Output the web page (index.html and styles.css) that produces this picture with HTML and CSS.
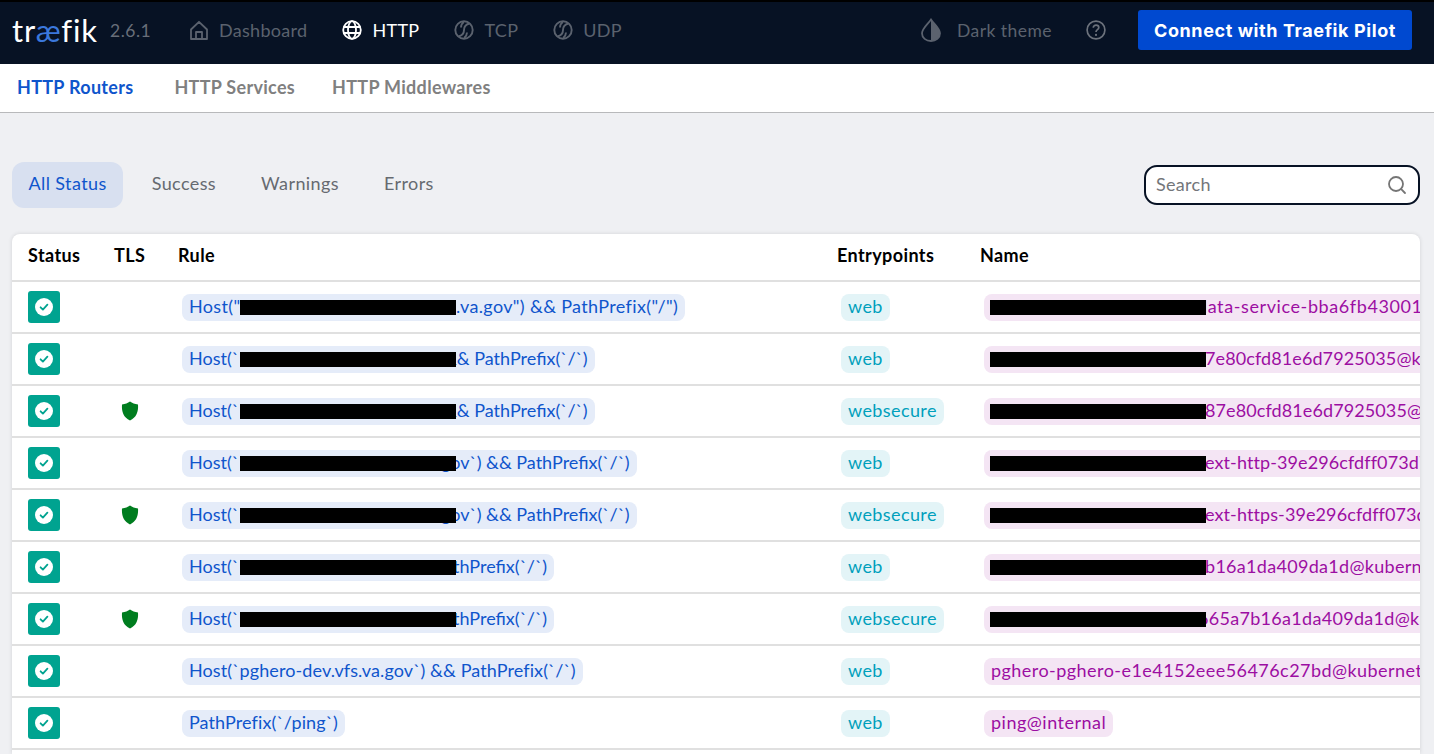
FILE: index.html
```html
<!DOCTYPE html>
<html lang="en">
<head>
<meta charset="utf-8">
<title>Traefik</title>
<link rel="stylesheet" href="styles.css">
</head>
<body>
<svg class="defs" width="0" height="0" aria-hidden="true">
  <symbol id="check" viewBox="0 0 18 18">
    <circle cx="9" cy="9" r="9" fill="#fff"/>
    <path d="M5.600 9.300l2.300 2.300 4.500-4.900" fill="none" stroke="#00a390" stroke-width="1.800" stroke-linecap="round" stroke-linejoin="round"/>
  </symbol>
  <symbol id="shield" viewBox="0 0 18 20">
    <path d="M9 .6c2.200 1.600 4.700 2.500 8 2.800.6 7.500-1.800 13.200-8 16-6.200-2.800-8.600-8.500-8-16 3.300-.3 5.800-1.200 8-2.800z" fill="#007d1f"/>
  </symbol>
  <symbol id="ball" viewBox="0 0 20 20">
    <circle cx="10" cy="10" r="8.700" fill="none" stroke="currentColor" stroke-width="1.900"/>
    <path d="M15.500 3.500c-4 1-5.500 3.500-5.500 6.500s-1.500 5.500-5.500 6.500M9.800 2c-2.500 1.800-2.800 3.500-2.800 5.500M13 12.500c0 2-.5 3.500-2.800 5.500" fill="none" stroke="currentColor" stroke-width="1.900"/>
  </symbol>
</svg>

<header class="topbar">
  <div class="brand">tr<span class="brand-ae">æ</span>fik</div>
  <span class="version">2.6.1</span>
  <nav class="mainnav">
    <a class="navitem">
      <svg class="navicon" viewBox="0 0 20 20"><path d="M2 9.500L10 1.800l8 7.700V19H2z M7 19v-7h6v7" fill="none" stroke="currentColor" stroke-width="1.800" stroke-linejoin="round"/></svg>
      Dashboard
    </a>
    <a class="navitem active">
      <svg class="navicon" viewBox="0 0 20 20"><g fill="none" stroke="currentColor" stroke-width="1.800"><circle cx="10" cy="10" r="8.800"/><ellipse cx="10" cy="10" rx="4" ry="8.800"/><path d="M1.500 7h17M1.500 13h17"/></g></svg>
      HTTP
    </a>
    <a class="navitem"><svg class="navicon"><use href="#ball"/></svg>TCP</a>
    <a class="navitem"><svg class="navicon"><use href="#ball"/></svg>UDP</a>
  </nav>
  <div class="topright">
    <a class="theme">
      <svg class="theme-icon" viewBox="0 0 20 24"><path d="M10 1.500C6.500 6.500 1 10.500 1 15.200 1 20 5 23 10 23s9-3 9-7.800C19 10.500 13.500 6.500 10 1.500z" fill="none" stroke="currentColor" stroke-width="1.800"/><path d="M10 1.500c3.500 5 9 9 9 13.700C19 20 15 23 10 23z" fill="currentColor"/></svg>
      Dark theme
    </a>
    <svg class="help" viewBox="0 0 20 20"><circle cx="10" cy="10" r="8.900" fill="none" stroke="currentColor" stroke-width="1.700"/><path d="M7.300 7.700c0-1.600 1.200-2.600 2.800-2.600s2.700 1 2.700 2.400c0 2.200-2.800 2.200-2.800 4.500" fill="none" stroke="currentColor" stroke-width="1.700"/><circle cx="10" cy="14.900" r="1.100" fill="currentColor"/></svg>
    <button class="pilot">Connect with Traefik Pilot</button>
  </div>
</header>

<nav class="subnav">
  <a class="subitem active">HTTP Routers</a>
  <a class="subitem">HTTP Services</a>
  <a class="subitem">HTTP Middlewares</a>
</nav>

<main class="content">
  <div class="toolbar">
    <div class="filters">
      <a class="filter active">All Status</a>
      <a class="filter">Success</a>
      <a class="filter">Warnings</a>
      <a class="filter">Errors</a>
    </div>
    <label class="search">
      <span class="search-text">Search</span>
      <svg class="search-icon" viewBox="0 0 20 20"><circle cx="9" cy="9" r="7" fill="none" stroke="currentColor" stroke-width="1.800"/><path d="M14.200 14.200L18 18" stroke="currentColor" stroke-width="1.800" stroke-linecap="round"/></svg>
    </label>
  </div>

  <section class="card">
    <div class="row head">
      <div>Status</div><div>TLS</div><div>Rule</div><div>Entrypoints</div><div>Name</div>
    </div>

    <div class="row">
      <div class="status"><svg class="check"><use href="#check"/></svg></div>
      <div></div>
      <div class="cell-chip"><span class="chip rule rule-wide"><span class="pre">Host("</span><i class="redact"></i><span>.va.gov") &amp;&amp; PathPrefix("/")</span></span></div>
      <div class="cell-chip"><span class="chip entry">web</span></div>
      <div class="cell-chip name-cell"><span class="chip name"><i class="redact"></i><span class="after a-data">data-service-bba6fb43001-kubernetes</span></span></div>
    </div>

    <div class="row">
      <div class="status"><svg class="check"><use href="#check"/></svg></div>
      <div></div>
      <div class="cell-chip"><span class="chip rule rule-tight"><span class="pre">Host(`</span><i class="redact"></i><span class="r-amp">&amp;&amp; PathPrefix(`/`)</span></span></div>
      <div class="cell-chip"><span class="chip entry">web</span></div>
      <div class="cell-chip name-cell"><span class="chip name hex"><i class="redact"></i><span class="after a-near">7e80cfd81e6d7925035@kubernetes</span></span></div>
    </div>

    <div class="row">
      <div class="status"><svg class="check"><use href="#check"/></svg></div>
      <div class="tls"><svg class="shield"><use href="#shield"/></svg></div>
      <div class="cell-chip"><span class="chip rule rule-tight"><span class="pre">Host(`</span><i class="redact"></i><span class="r-amp">&amp;&amp; PathPrefix(`/`)</span></span></div>
      <div class="cell-chip"><span class="chip entry">websecure</span></div>
      <div class="cell-chip name-cell"><span class="chip name hex"><i class="redact"></i><span class="after a-near">87e80cfd81e6d7925035@kubernetes</span></span></div>
    </div>

    <div class="row">
      <div class="status"><svg class="check"><use href="#check"/></svg></div>
      <div></div>
      <div class="cell-chip"><span class="chip rule rule-tight"><span class="pre">Host(`</span><i class="redact"></i><span class="r-gov">gov`) &amp;&amp; PathPrefix(`/`)</span></span></div>
      <div class="cell-chip"><span class="chip entry">web</span></div>
      <div class="cell-chip name-cell"><span class="chip name hex"><i class="redact"></i><span class="after a-near">ext-http-39e296cfdff073d7e@kubernetes</span></span></div>
    </div>

    <div class="row">
      <div class="status"><svg class="check"><use href="#check"/></svg></div>
      <div class="tls"><svg class="shield"><use href="#shield"/></svg></div>
      <div class="cell-chip"><span class="chip rule rule-tight"><span class="pre">Host(`</span><i class="redact"></i><span class="r-gov">gov`) &amp;&amp; PathPrefix(`/`)</span></span></div>
      <div class="cell-chip"><span class="chip entry">websecure</span></div>
      <div class="cell-chip name-cell"><span class="chip name hex"><i class="redact"></i><span class="after a-near">ext-https-39e296cfdff073d7e@kubernetes</span></span></div>
    </div>

    <div class="row">
      <div class="status"><svg class="check"><use href="#check"/></svg></div>
      <div></div>
      <div class="cell-chip"><span class="chip rule rule-tight"><span class="pre">Host(`</span><i class="redact"></i><span class="r-th">thPrefix(`/`)</span></span></div>
      <div class="cell-chip"><span class="chip entry">web</span></div>
      <div class="cell-chip name-cell"><span class="chip name hex-mid"><i class="redact"></i><span class="after a-near">b16a1da409da1d@kubernetes</span></span></div>
    </div>

    <div class="row">
      <div class="status"><svg class="check"><use href="#check"/></svg></div>
      <div class="tls"><svg class="shield"><use href="#shield"/></svg></div>
      <div class="cell-chip"><span class="chip rule rule-tight"><span class="pre">Host(`</span><i class="redact"></i><span class="r-th">thPrefix(`/`)</span></span></div>
      <div class="cell-chip"><span class="chip entry">websecure</span></div>
      <div class="cell-chip name-cell"><span class="chip name hex-mid"><i class="redact"></i><span class="after a-under">665a7b16a1da409da1d@kubernetes</span></span></div>
    </div>

    <div class="row">
      <div class="status"><svg class="check"><use href="#check"/></svg></div>
      <div></div>
      <div class="cell-chip"><span class="chip rule">Host(`pghero-dev.vfs.va.gov`) &amp;&amp; PathPrefix(`/`)</span></div>
      <div class="cell-chip"><span class="chip entry">web</span></div>
      <div class="cell-chip name-cell"><span class="chip name name-long">pghero-pghero-e1e4152eee56476c27bd@kubernetes</span></div>
    </div>

    <div class="row">
      <div class="status"><svg class="check"><use href="#check"/></svg></div>
      <div></div>
      <div class="cell-chip"><span class="chip rule">PathPrefix(`/ping`)</span></div>
      <div class="cell-chip"><span class="chip entry">web</span></div>
      <div class="cell-chip name-cell"><span class="chip name ping">ping@internal</span></div>
    </div>
  </section>
</main>
</body>
</html>
```
FILE: styles.css
```css
* { box-sizing: border-box; }
html, body { margin: 0; height: 754px; overflow: hidden; }
body {
  background: #eff0f3;
  font-family: "Lato", "Noto Sans", sans-serif;
  font-size: 18px;
  color: #000;
}
.defs { position: absolute; }
a { display: flex; align-items: center; }

.topbar {
  height: 64px;
  background: #071224;
  border-top: 2px solid #000;
  display: flex;
  align-items: center;
  padding: 0 22px 6px 12px;
}
.brand {
  font-size: 31px;
  font-weight: 400;
  color: #fff;
  width: 98px;
  letter-spacing: .8px;
}
.brand-ae { color: #3b78dc; }
.version { color: #686e79; font-size: 17.5px; width: 79px; letter-spacing: .5px; }
.mainnav { display: flex; gap: 35px; }
.navitem { color: #5b626e; font-size: 18px; gap: 10px; letter-spacing: .3px; }
.navitem.active { color: #fff; }
.navicon { width: 20px; height: 20px; color: inherit; }
.topright { margin-left: auto; display: flex; align-items: center; }
.theme { color: #5b626e; font-size: 17.5px; gap: 16px; letter-spacing: .45px; }
.theme-icon { width: 20px; height: 24px; }
.help { width: 20px; height: 20px; color: #6c727c; margin: 0 32px 0 34px; }
.pilot {
  width: 274px;
  height: 40px;
  background: #0049d0;
  color: #fff;
  border: 0;
  border-radius: 3px;
  font-family: "Inter", sans-serif;
  font-weight: 700;
  font-size: 18px;
  letter-spacing: .6px;
}

.subnav {
  height: 49px;
  background: #fff;
  border-bottom: 1px solid #b8b9bb;
  display: flex;
  align-items: center;
  padding: 0 0 2px 17px;
  gap: 37px;
}
.subitem { color: #808080; font-weight: 700; font-size: 18px; letter-spacing: .3px; }
.subitem.active { color: #0f55cc; margin-right: 4px; }

.content { padding: 49px 14px 0 12px; }
.toolbar { display: flex; align-items: center; justify-content: space-between; height: 46px; }
.filters { display: flex; gap: 12px; align-items: center; }
.filter { height: 46px; padding: 0 16.5px 4px; border-radius: 12px; color: #666a70; font-size: 18px; letter-spacing: .4px; }
.filter.active { background: #d8e0f0; color: #0f55cc; }
.search {
  width: 276px;
  height: 40px;
  background: #fff;
  border: 2px solid #071224;
  border-radius: 13px;
  display: flex;
  align-items: center;
  justify-content: space-between;
  padding: 0 11px 0 10px;
}
.search-text { color: #73767a; font-size: 18px; letter-spacing: .3px; padding-bottom: 2px; }
.search-icon { width: 20px; height: 20px; color: #757575; }

.card {
  margin-top: 26px;
  background: #fff;
  border-radius: 8px 8px 0 0;
  box-shadow: 0 0 4px rgba(0, 0, 0, .12);
  overflow: hidden;
  height: 520px;
}
.row {
  display: grid;
  grid-template-columns: 86px 64px 659px 143px 1fr;
  align-items: center;
  height: 52px;
  padding-left: 16px;
  border-bottom: 2px solid #e0e0e0;
  white-space: nowrap;
}
.row.head { height: 48px; font-weight: 700; font-size: 18px; letter-spacing: .4px; padding-bottom: 4px; }
.status {
  width: 32px;
  height: 32px;
  background: #00a390;
  border-radius: 3px;
  display: flex;
  align-items: center;
  justify-content: center;
}
.check { width: 18px; height: 18px; }
.tls { display: flex; padding-left: 7px; }
.shield { width: 18px; height: 20px; }
.cell-chip { padding-left: 4px; min-width: 0; }
.name-cell { overflow: hidden; }
.chip {
  display: inline-flex;
  align-items: center;
  height: 27px;
  padding: 0 7px 3px;
  border-radius: 8px;
  font-size: 18px;
  letter-spacing: .1px;
  white-space: pre;
}
.rule { background: #e5ecf9; color: #0f55cc; }
.rule-wide { letter-spacing: .35px; }
.rule-tight { letter-spacing: 0; }
.entry { background: #e3f4f7; color: #00a0bc; letter-spacing: .4px; }
.name { background: #f4e5f4; color: #9c0ea2; letter-spacing: .6px; }
.name.hex { letter-spacing: .1px; }
.name.hex-mid { letter-spacing: .3px; }
.name.name-long { letter-spacing: .45px; }
.name.ping { letter-spacing: .5px; }
.pre { display: inline-block; width: 51px; }
.redact { display: block; width: 216px; height: 15px; background: #000; flex: none; position: relative; z-index: 1; margin-top: 3px; }
.name .redact { margin-left: -1px; }
.after { position: relative; }
.a-data { margin-left: -9px; }
.a-near { margin-left: -1px; }
.a-under { margin-left: -8px; }
.r-amp { margin-left: -12px; }
.r-gov { margin-left: -15px; }
.r-th { margin-left: -3px; }
```
